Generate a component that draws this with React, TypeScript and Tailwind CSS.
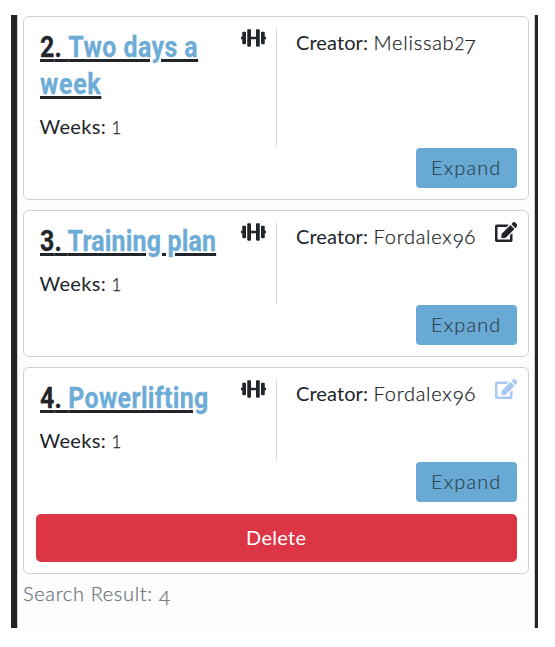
import React from "react";
import { FaDumbbell, FaEdit } from "react-icons/fa";

type Plan = {
  id: number;
  title: React.ReactNode;
  creator: React.ReactNode;
  edit?: string;
  removable?: boolean;
  height: string;
  row: string;
};

// Old-style figure that hangs below the baseline.
function Low({ children }: { children: React.ReactNode }) {
  return <span className="align-[-4px] leading-none">{children}</span>;
}

const fordalex = (
  <>
    <span className="tracking-[0.75px]">Fordalex</span>
    <Low>9</Low>6
  </>
);

const plans: Plan[] = [
  {
    id: 2,
    title: (
      <>
        <span className="tracking-[0.5px]">Two days a</span>
        <br />
        <span className="tracking-[0.8px]">week</span>
      </>
    ),
    creator: (
      <>
        <span className="tracking-[0.75px]">Melissab</span>
        <span className="text-[17px]">2</span>
        <Low>7</Low>
      </>
    ),
    height: "h-[184px]",
    row: "h-[120px]",
  },
  {
    id: 3,
    title: <span className="tracking-[0.2px]">Training plan</span>,
    creator: fordalex,
    edit: "text-[#212529]",
    height: "h-[147px]",
    row: "h-[83px]",
  },
  {
    id: 4,
    title: <span className="tracking-[0.4px]">Powerlifting</span>,
    creator: fordalex,
    edit: "text-[#a9c8f4]",
    removable: true,
    height: "h-[207px]",
    row: "h-[83px]",
  },
];

function PlanCard({ plan }: { plan: Plan }) {
  return (
    <article className={`rounded-[6px] border border-[#cfd0d1] bg-white px-[11px] pt-[11px] ${plan.height}`}>
      <div className={`flex items-start ${plan.row}`}>
        <div className="flex h-full w-[242px] shrink-0 justify-between pb-px">
          <div className="pl-[5px]">
            <h2 className="mt-[1px] -mr-[70px] w-[250px] origin-left scale-x-[0.86] whitespace-nowrap font-['Roboto','Liberation_Sans',sans-serif] text-[29px] font-bold leading-[37px] text-[#212529] underline decoration-[#212529] decoration-[3px] underline-offset-[2px] [-webkit-text-stroke:0.3px]">
              <span className="tracking-[0.2px]">{plan.id}. </span>
              <span className="text-[#6cacd6]">{plan.title}</span>
            </h2>
            <p className="-ml-[0.5px] mt-[8px] text-[20px] leading-[30px]">
              <span className="font-normal tracking-[0.35px]">Weeks:</span>{" "}
              <span className="text-[17px] [-webkit-text-stroke:0.25px]">1</span>
            </p>
          </div>
          <div className="flex h-full border-r border-[#d9dadb] pr-[10px]">
            <FaDumbbell className="-mt-[0.4px] h-[20px] w-[25px]" />
          </div>
        </div>
        <div className="flex flex-1 justify-between pl-[19px]">
          <p className="h-[30px] whitespace-nowrap text-[20px] leading-[28px]">
            <span className="font-normal tracking-[0.1px]">Creator:</span>{" "}
            <span className="[-webkit-text-stroke:0.25px]">{plan.creator}</span>
          </p>
          {plan.edit && (
            <FaEdit className={`-mt-[0.4px] -ml-[10px] h-[20px] w-[22.5px] shrink-0 ${plan.edit}`} />
          )}
        </div>
      </div>
      <div className="-mt-[0.4px] flex justify-end">
        <button className="h-[40.4px] w-[101.5px] rounded-[4px] bg-[#69aad5] pb-[2px] text-[20px] font-light tracking-[1.1px] text-[#2c424f] [-webkit-text-stroke:0.2px]">
          Expand
        </button>
      </div>
      {plan.removable && (
        <button className="mt-[12px] ml-[1px] h-[48px] w-[480.5px] rounded-[5px] bg-[#dc3545] pb-[2px] text-[20px] font-normal tracking-[0.3px] text-white">
          Delete
        </button>
      )}
    </article>
  );
}

export default function App() {
  return (
    <div className="h-[647px] w-[555px] bg-white pt-[15px] pl-[11px] font-['Lato','Open_Sans',sans-serif] font-light text-[#212529]">
      <div className="flex h-[613px] w-[527px] border-r-[3px] border-l-[6px] border-[#242424]">
        <main className="flex flex-1 flex-col gap-[10px] border-x border-[#cfcfcf] bg-[#fdfdfd] pt-px pr-[5px] pl-[5px]">
          {plans.map((plan) => (
            <PlanCard key={plan.id} plan={plan} />
          ))}
          <p className="-mt-[5px] text-[20px] leading-[28px] tracking-[0.65px] text-[#6c757d] [-webkit-text-stroke:0.25px]">
            Search Result: <Low>4</Low>
          </p>
        </main>
      </div>
    </div>
  );
}
